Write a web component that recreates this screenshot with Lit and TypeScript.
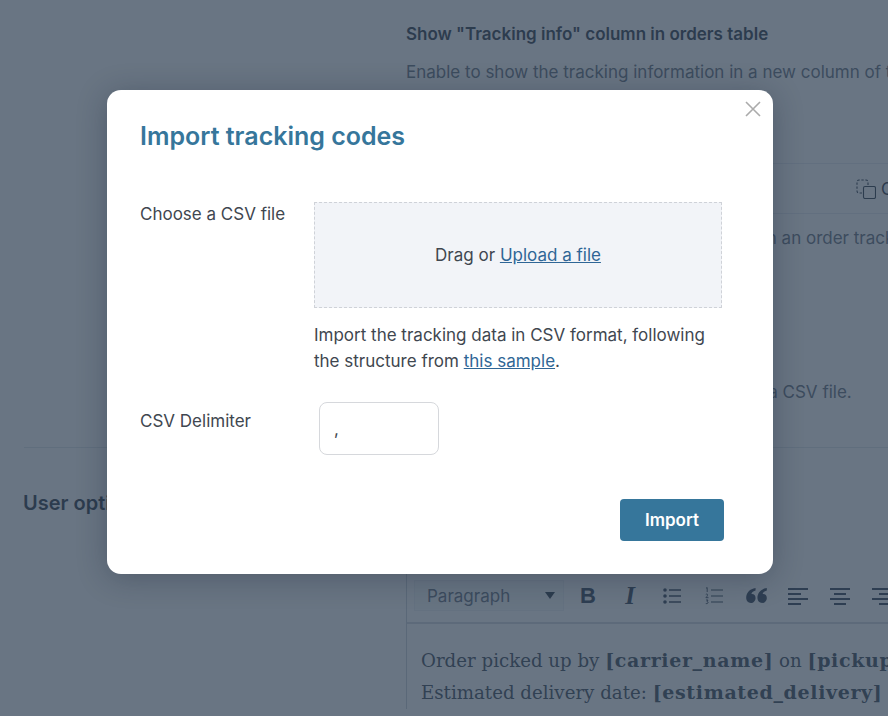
import { LitElement, html, css } from "lit";
import { customElement } from "lit/decorators.js";

@customElement("app-root")
export class AppRoot extends LitElement {
  static styles = css`
    :host { display: block; width: 888px; height: 716px; position: relative; overflow: hidden; background: #fff; font-family: Inter, "Liberation Sans", sans-serif; color: #5b6777; font-size: 17px; }
    .page { width: 888px; height: 716px; overflow: hidden; display: flex; flex-direction: column; }
    .line { white-space: nowrap; }
    .top { padding: 22px 0 0 406px; display: flex; flex-direction: column; }
    .top-title { font-weight: 600; line-height: 24px; color: #1f2d3d; }
    .top-desc { margin-top: 14px; line-height: 24px; }
    .copybar { margin-top: 79px; height: 51px; border-top: 1px solid #e6e9ee; border-bottom: 1px solid #e6e9ee; box-sizing: border-box; display: flex; align-items: center; padding-left: 450px; gap: 5px; white-space: nowrap; color: #1f2d3d; }
    .copybar svg { flex: none; }
    .short { margin-top: 12px; line-height: 24px; }
    .csv { margin-top: 130px; line-height: 24px; }
    .sep { margin: 43px 0 0 24px; border-top: 1px solid #dfe3e8; }
    .opts { display: grid; grid-template-columns: 383px 1fr; padding-left: 23px; }
    .opts-title { margin-top: 41px; font-size: 20px; font-weight: 600; line-height: 28px; color: #1f2d3d; }
    .editor { margin-top: 121px; border-left: 1px solid #c9ced6; width: 482px; box-sizing: border-box; }
    .toolbar { height: 55px; border-bottom: 2px solid #d3d7dd; box-sizing: border-box; display: flex; align-items: center; padding: 0 0 0 7px; }
    .select { width: 150px; height: 31px; flex: none; background: #f8f9fb; border: 1px solid #eceef2; box-sizing: border-box; display: flex; align-items: center; justify-content: space-between; padding: 0 8px 0 12px; color: #5b6777; }
    .caret { width: 0; height: 0; border-left: 5px solid transparent; border-right: 5px solid transparent; border-top: 7px solid #1f2d3d; }
    .tools { display: flex; align-items: center; color: #27364a; margin-left: 3px; flex: none; }
    .tool { width: 42px; height: 30px; flex: none; display: flex; align-items: center; justify-content: center; }
    .tool svg { display: block; }
    .b { font: 700 22px "Liberation Sans", sans-serif; }
    .i { font: italic 700 25px "Liberation Serif", serif; }
    .content { padding: 21px 0 0 14px; font-family: "DejaVu Serif", serif; font-size: 18.2px; line-height: 32px; color: #33404f; white-space: nowrap; }
    .content b { font-size: 19px; letter-spacing: 0.65px; line-height: 1; }
    .overlay { position: absolute; inset: 0; background: rgba(50, 66, 85, 0.73); padding: 90px 0 0 107px; box-sizing: border-box; }
    .modal { position: relative; width: 666px; height: 484px; background: #fff; border-radius: 14px; box-shadow: 0 4px 30px rgba(20, 30, 45, 0.3); box-sizing: border-box; padding: 28px 49px 0 33px; color: #3f4750; display: flex; flex-direction: column; }
    .close { position: absolute; top: 11px; right: 12px; width: 16px; height: 16px; background: none; border: 0; padding: 0; display: block; }
    h2 { margin: 0; font-size: 25px; line-height: 36px; font-weight: 600; color: #36769b; }
    .row { display: grid; grid-template-columns: 174px 1fr; }
    .file { margin-top: 48px; }
    .lab { line-height: 24px; }
    .drop { width: 408px; height: 106px; box-sizing: border-box; background: #f2f4f8; border: 1px dashed #cfd2d8; display: flex; align-items: center; justify-content: center; }
    a { color: #2f6696; text-decoration: underline; }
    .help { margin: 14px 0 0; line-height: 26px; }
    .delim { margin-top: 28px; grid-template-columns: 179px 1fr; }
    .delim .lab { padding-top: 7px; }
    input { width: 120px; height: 53px; box-sizing: border-box; border: 1px solid #d6d8dc; border-radius: 8px; background: #fff; padding: 0 14px; font: 17px Inter, sans-serif; color: #3f4750; outline: none; display: block; }
    .foot { display: flex; justify-content: flex-end; margin-top: 44px; }
    button.go { width: 104px; height: 42px; background: #36769b; color: #fff; border: 0; border-radius: 4px; font: 600 17px Inter, sans-serif; }
  `;

  render() {
    return html`
      <div class="page">
        <div class="top">
          <div class="top-title line">Show "Tracking info" column in orders table</div>
          <div class="top-desc line">Enable to show the tracking information in a new column of the orders table.</div>
          <div class="copybar">
            <svg width="20" height="20" viewBox="0 0 20 20" fill="none" stroke="currentColor" stroke-width="1.1">
              <path stroke-dasharray="2.4 1.6" d="M6 14H3a2 2 0 0 1-2-2V3a2 2 0 0 1 2-2h7a2 2 0 0 1 2 2v3"></path>
              <rect x="7.500" y="7.500" width="12" height="12" rx="1.500"></rect>
            </svg>
            <span>Copy</span>
          </div>
          <div class="short line">Use this shortcode to show the tracking link in an order tracking page</div>
          <div class="csv line">Import the tracking codes by uploading from a CSV file.</div>
        </div>
        <div class="sep"></div>
        <div class="opts">
          <div class="opts-title line">User options</div>
          <div class="editor">
            <div class="toolbar">
              <div class="select"><span>Paragraph</span><span class="caret"></span></div>
              <div class="tools">
                <span class="tool b">B</span>
                <span class="tool i">I</span>
                <span class="tool">
                  <svg width="18" height="18" viewBox="0 0 18 18" fill="none" stroke="currentColor" stroke-width="1.3">
                    <path d="M6 3h12M6 9h12M6 15h12"></path>
                    <g fill="currentColor" stroke="none"><circle cx="2" cy="3" r="1.800"></circle><circle cx="2" cy="9" r="1.800"></circle><circle cx="2" cy="15" r="1.800"></circle></g>
                  </svg>
                </span>
                <span class="tool">
                  <svg width="18" height="18" viewBox="0 0 18 18" fill="none" stroke="currentColor" stroke-width="1.2">
                    <path d="M6 3h12M6 9h12M6 15h12"></path>
                    <path stroke-width=".9" d="M1 1.200 2.200.6V5M.8 7.500c1.500-1.300 3 .2.1 3.200h2.600M1 13h2l-1 1.600c1.600 0 1.600 2.400-1.200 2"></path>
                  </svg>
                </span>
                <span class="tool">
                  <svg width="21" height="15" viewBox="0 0 22 16" fill="currentColor">
                    <path d="M10 0v2.600C7 3.400 5.800 5 5.600 6.400 8 6 10 7.800 10 10.600 10 13.600 7.800 16 5 16 2 16 0 13.600 0 10.500 0 5 4 .8 10 0Z"></path>
                    <path d="M22 0v2.600c-3 .8-4.200 2.400-4.400 3.800 2.400-.4 4.400 1.400 4.400 4.200 0 3-2.200 5.400-5 5.400-3 0-5-2.400-5-5.500C12 5 16 .8 22 0Z"></path>
                  </svg>
                </span>
                <span class="tool">
                  <svg width="20" height="18" viewBox="0 0 20 18" fill="none" stroke="currentColor" stroke-width="2"><path d="M0 2h20M0 7h13M0 12h20M0 17h13"></path></svg>
                </span>
                <span class="tool">
                  <svg width="20" height="18" viewBox="0 0 20 18" fill="none" stroke="currentColor" stroke-width="2"><path d="M0 2h20M4 7h12M0 12h20M4 17h12"></path></svg>
                </span>
                <span class="tool">
                  <svg width="20" height="18" viewBox="0 0 20 18" fill="none" stroke="currentColor" stroke-width="2"><path d="M0 2h20M7 7h13M0 12h20M7 17h13"></path></svg>
                </span>
              </div>
            </div>
            <div class="content">
              <div>Order picked up by <b>[carrier_name]</b> on <b>[pickup_date]</b></div>
              <div>Estimated delivery date: <b>[estimated_delivery]</b></div>
            </div>
          </div>
        </div>
      </div>
      <div class="overlay">
        <div class="modal">
          <button class="close" aria-label="Close">
            <svg width="16" height="16" viewBox="0 0 16 16" fill="none" stroke="#ababab" stroke-width="1.6"><path d="M1 1l14 14M15 1 1 15"></path></svg>
          </button>
          <h2>Import tracking codes</h2>
          <div class="row file">
            <div class="lab">Choose a CSV file</div>
            <div>
              <div class="drop"><span>Drag or <a href="#">Upload a file</a></span></div>
              <p class="help">Import the tracking data in CSV format, following<br />the structure from <a href="#">this sample</a>.</p>
            </div>
          </div>
          <div class="row delim">
            <div class="lab">CSV Delimiter</div>
            <input .value=${","} aria-label="CSV Delimiter" />
          </div>
          <div class="foot"><button class="go">Import</button></div>
        </div>
      </div>
    `;
  }
}
